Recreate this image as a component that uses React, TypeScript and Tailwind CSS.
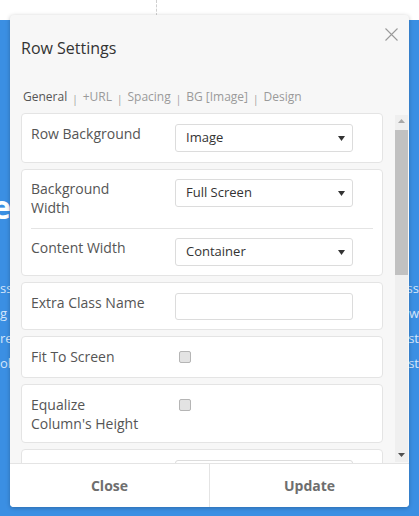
import React from 'react';

const Caret = () => (
  <svg width="7" height="5" viewBox="0 0 7 5" className="shrink-0">
    <path d="M0 0h7L3.5 5z" fill="#333" />
  </svg>
);

const Select = ({ value }: { value: string }) => (
  <div className="w-[178px] h-[28px] shrink-0 bg-white border border-[#dcdcdc] rounded-[3px] flex items-center justify-between pl-[10px] pr-[7px] text-[13px] text-[#333]">
    <span>{value}</span>
    <Caret />
  </div>
);

const Label = ({ children }: { children?: React.ReactNode }) => (
  <div className="w-[144px] shrink-0 text-[14px] leading-[19px] text-[#555]">{children}</div>
);

const Checkbox = () => (
  <div className="ml-[4px] mt-[4px] w-[12px] h-[12px] rounded-[2px] border border-[#b5b5b5] bg-[#e3e3e3]" />
);

const tabs = ['General', '+URL', 'Spacing', 'BG [Image]', 'Design'];

const App = () => {
  return (
    <div className="relative w-[419px] h-[516px] overflow-hidden bg-white font-['Open_Sans',sans-serif]">
      {/* page behind the dialog */}
      <div className="h-[20px]">
        <div className="ml-[156px] h-[16px] border-l border-dashed border-[#cfcfcf]" />
      </div>
      <div className="h-[496px] bg-[#3b8fe3] flex flex-col pt-[170px] text-[#d4e6fb]">
        <div className="h-[34px] flex justify-between items-center text-white font-bold text-[32px] leading-[34px]">
          <span className="ml-[-8px]">e</span>
          <span className="mr-[-16px]">E</span>
        </div>
        <div className="mt-[52px] flex flex-col text-[13px] leading-[25px]">
          <div className="flex justify-between"><span>ss</span><span>ss</span></div>
          <div className="flex justify-between"><span>g</span><span>w</span></div>
          <div className="flex justify-between"><span>re</span><span>st</span></div>
          <div className="flex justify-between"><span>ol</span><span>st</span></div>
        </div>
      </div>

      {/* dialog */}
      <div className="absolute left-[10px] top-[15px] w-[399px] h-[492px] bg-[#f7f7f7] rounded-[4px] shadow-[0_1px_4px_rgba(0,0,0,0.25)] flex flex-col overflow-hidden">
        <div className="flex justify-between items-start">
          <div className="pl-[11px] pt-[21px] text-[16px] leading-[24px] text-[#333]">Row Settings</div>
          <svg width="13" height="13" viewBox="0 0 13 13" className="mt-[13px] mr-[11px]">
            <path d="M0.5 0.5l12 12M12.5 0.5l-12 12" stroke="#9a9a9a" strokeWidth="1.1" />
          </svg>
        </div>

        <div className="mt-[29px] pl-[13px] flex items-center text-[12px] leading-[16px]">
          {tabs.map((t, i) => (
            <React.Fragment key={t}>
              {i > 0 && <span className="mx-[5px] text-[10px] text-[#999] translate-y-[2px]">|</span>}
              <span className={i === 0 ? 'text-[#555]' : 'text-[#9a9a9a]'}>{t}</span>
            </React.Fragment>
          ))}
        </div>

        <div className="mt-[8px] h-[350px] flex">
          <div className="ml-[11px] w-[362px] h-[350px] overflow-hidden flex flex-col gap-[6px]">
            <div className="shrink-0 bg-white border border-[#e4e4e4] rounded-[4px] flex pl-[9px] pt-[10px] pb-[10px]">
              <Label>Row Background</Label>
              <Select value="Image" />
            </div>

            <div className="shrink-0 bg-white border border-[#e4e4e4] rounded-[4px] flex flex-col">
              <div className="flex pl-[9px] pt-[9px] pb-[11px]">
                <Label>Background<br />Width</Label>
                <Select value="Full Screen" />
              </div>
              <div className="mx-[9px] h-px bg-[#e4e4e4]" />
              <div className="flex pl-[9px] py-[9px]">
                <Label>Content Width</Label>
                <Select value="Container" />
              </div>
            </div>

            <div className="shrink-0 bg-white border border-[#e4e4e4] rounded-[4px] flex pl-[9px] pt-[10px] pb-[9px]">
              <Label>Extra Class Name</Label>
              <div className="w-[178px] h-[27px] bg-white border border-[#dcdcdc] rounded-[3px]" />
            </div>

            <div className="shrink-0 bg-white border border-[#e4e4e4] rounded-[4px] flex items-start pl-[9px] pt-[10px] pb-[11px]">
              <Label>Fit To Screen</Label>
              <Checkbox />
            </div>

            <div className="shrink-0 bg-white border border-[#e4e4e4] rounded-[4px] flex items-start pl-[9px] pt-[10px] pb-[9px]">
              <Label>Equalize<br />Column's Height</Label>
              <Checkbox />
            </div>

            <div className="shrink-0 h-[60px] bg-white border border-[#e4e4e4] rounded-[4px] flex pl-[9px] pt-[10px]">
              <Label />
              <div className="w-[178px] h-[28px] bg-white border border-[#dcdcdc] rounded-[3px]" />
            </div>
          </div>

          {/* scrollbar */}
          <div className="ml-[12px] mt-[2px] w-[13px] h-[347px] bg-[#efefef] flex flex-col items-center">
            <svg width="7" height="4" viewBox="0 0 7 4" className="mt-[4px]">
              <path d="M3.5 0L7 4H0z" fill="#a8a8a8" />
            </svg>
            <div className="mt-[7px] w-[13px] h-[145px] bg-[#c1c1c1]" />
            <div className="flex-1" />
            <svg width="7" height="4" viewBox="0 0 7 4" className="mb-[5px]">
              <path d="M0 0h7L3.5 4z" fill="#505050" />
            </svg>
          </div>
        </div>

        <div className="flex-1 bg-white border-t border-[#e4e4e4] flex text-[14px] font-bold text-[#6e6e6e]">
          <div className="flex-1 flex items-center justify-center border-r border-[#e4e4e4]">Close</div>
          <div className="flex-1 flex items-center justify-center">Update</div>
        </div>
      </div>
    </div>
  );
};

export default App;
